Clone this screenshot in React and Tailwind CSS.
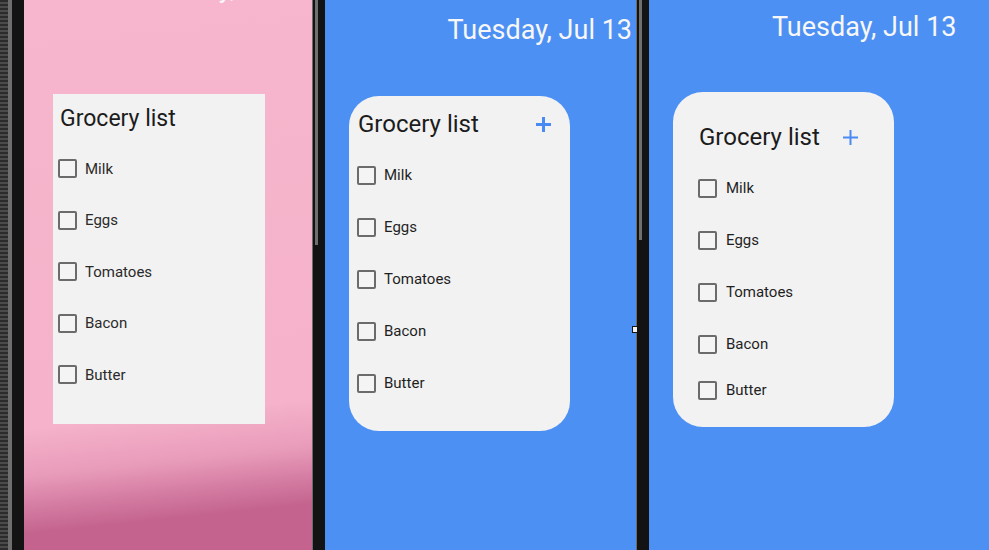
import React from "react";

const items = ["Milk", "Eggs", "Tomatoes", "Bacon", "Butter"];

function Box() {
  return <div className="w-[19px] h-[19px] shrink-0 rounded-[2px] border-2 border-[#6b6b6b] bg-[#f4f4f4]" />;
}

function Plus({ thick }) {
  return (
    <svg width="17" height="17" viewBox="0 0 17 17" className="shrink-0">
      <path d="M8.5 1v15M1 8.5h15" stroke="#4a8af4" strokeWidth={thick ? 3 : 2} fill="none" />
    </svg>
  );
}

function Divider({ strip }) {
  return (
    <div className="w-[13px] h-full flex bg-[#131313]">
      <div className="w-px h-full bg-[#6b6b6b]" />
      <div className="w-[2px]" />
      <div className={`w-[3px] ${strip} bg-[#6f6f6f]`} />
    </div>
  );
}

export default function App() {
  return (
    <div className="relative w-[989px] h-[550px] flex overflow-hidden font-['Roboto',sans-serif] bg-[#131313]">
      {/* left bezel */}
      <div className="w-[8px] h-full bg-[repeating-linear-gradient(0deg,#2b2b2b_0px,#2b2b2b_2px,#4a4a4a_2px,#4a4a4a_4px)]" />
      <div className="w-[4px] h-full bg-[#6e6e6e]" />
      <div className="w-[12px] h-full bg-[#131313]" />

      {/* pink phone */}
      <div className="w-[288px] h-full flex flex-col overflow-hidden bg-[linear-gradient(174deg,#f7b6cd_0%,#f5b2ca_74%,#e99cba_82%,#d67fa5_87%,#c4648e_92%,#c4648e_100%)]">
        <div className="h-[3px] pl-[107px] -mt-[27px] text-[27px] leading-[30px] text-[#f7f7f7] whitespace-nowrap">
          Tuesday, Jul 13
        </div>
        <div className="ml-[29px] mt-[118px] w-[212px] h-[330px] bg-[#f2f2f2] pl-[5px]">
          <div className="pl-[2px] mt-[11px] text-[23px] leading-[27px] text-[#1c1c1c]">Grocery list</div>
          <div className="mt-[11px]">
            {items.map((t) => (
              <div key={t} className="h-[51.5px] flex items-center gap-[8px]">
                <Box />
                <span className="text-[15px] text-[#2a2a2a]">{t}</span>
              </div>
            ))}
          </div>
        </div>
      </div>

      <Divider strip="h-[245px]" />

      {/* middle phone */}
      <div className="w-[311px] h-full bg-[#4d90f4]">
        <div className="pr-[4px] pt-[15px] text-right text-[27px] leading-[30px] text-[#f7f7f7] whitespace-nowrap">
          Tuesday, Jul 13
        </div>
        <div className="ml-[24px] mt-[51px] w-[221px] h-[335px] rounded-[30px] bg-[#f2f2f2] pl-[8px] pr-[18px]">
          <div className="pt-[14px] flex items-center justify-between">
            <span className="pl-[1px] text-[24px] leading-[28px] text-[#1c1c1c]">Grocery list</span>
            <Plus thick />
          </div>
          <div className="mt-[11px]">
            {items.map((t) => (
              <div key={t} className="h-[52px] flex items-center gap-[8px]">
                <Box />
                <span className="text-[15px] text-[#1f1f1f]">{t}</span>
              </div>
            ))}
          </div>
        </div>
      </div>

      <Divider strip="h-[240px]" />

      {/* right phone */}
      <div className="w-[340px] h-full bg-[#4d90f4]">
        <div className="pl-[123px] pt-[12px] text-[27px] leading-[30px] text-[#f7f7f7] whitespace-nowrap">
          Tuesday, Jul 13
        </div>
        <div className="ml-[24px] mt-[50px] w-[221px] h-[335px] rounded-[30px] bg-[#f2f2f2] pl-[25px]">
          <div className="pt-[31px] flex items-center gap-[22px]">
            <span className="pl-[1px] text-[24px] leading-[28px] text-[#1c1c1c]">Grocery list</span>
            <Plus />
          </div>
          <div className="mt-[11px]">
            {items.map((t, i) => (
              <div key={t} className={`${i === 4 ? "h-[40px]" : "h-[52px]"} flex items-center gap-[9px]`}>
                <Box />
                <span className="text-[15px] text-[#1f1f1f]">{t}</span>
              </div>
            ))}
          </div>
        </div>
      </div>

      {/* resize handle */}
      <div className="absolute left-[632px] top-[326px] w-[6px] h-[7px] bg-[#f2f2f2] border border-[#131313]" />
    </div>
  );
}
